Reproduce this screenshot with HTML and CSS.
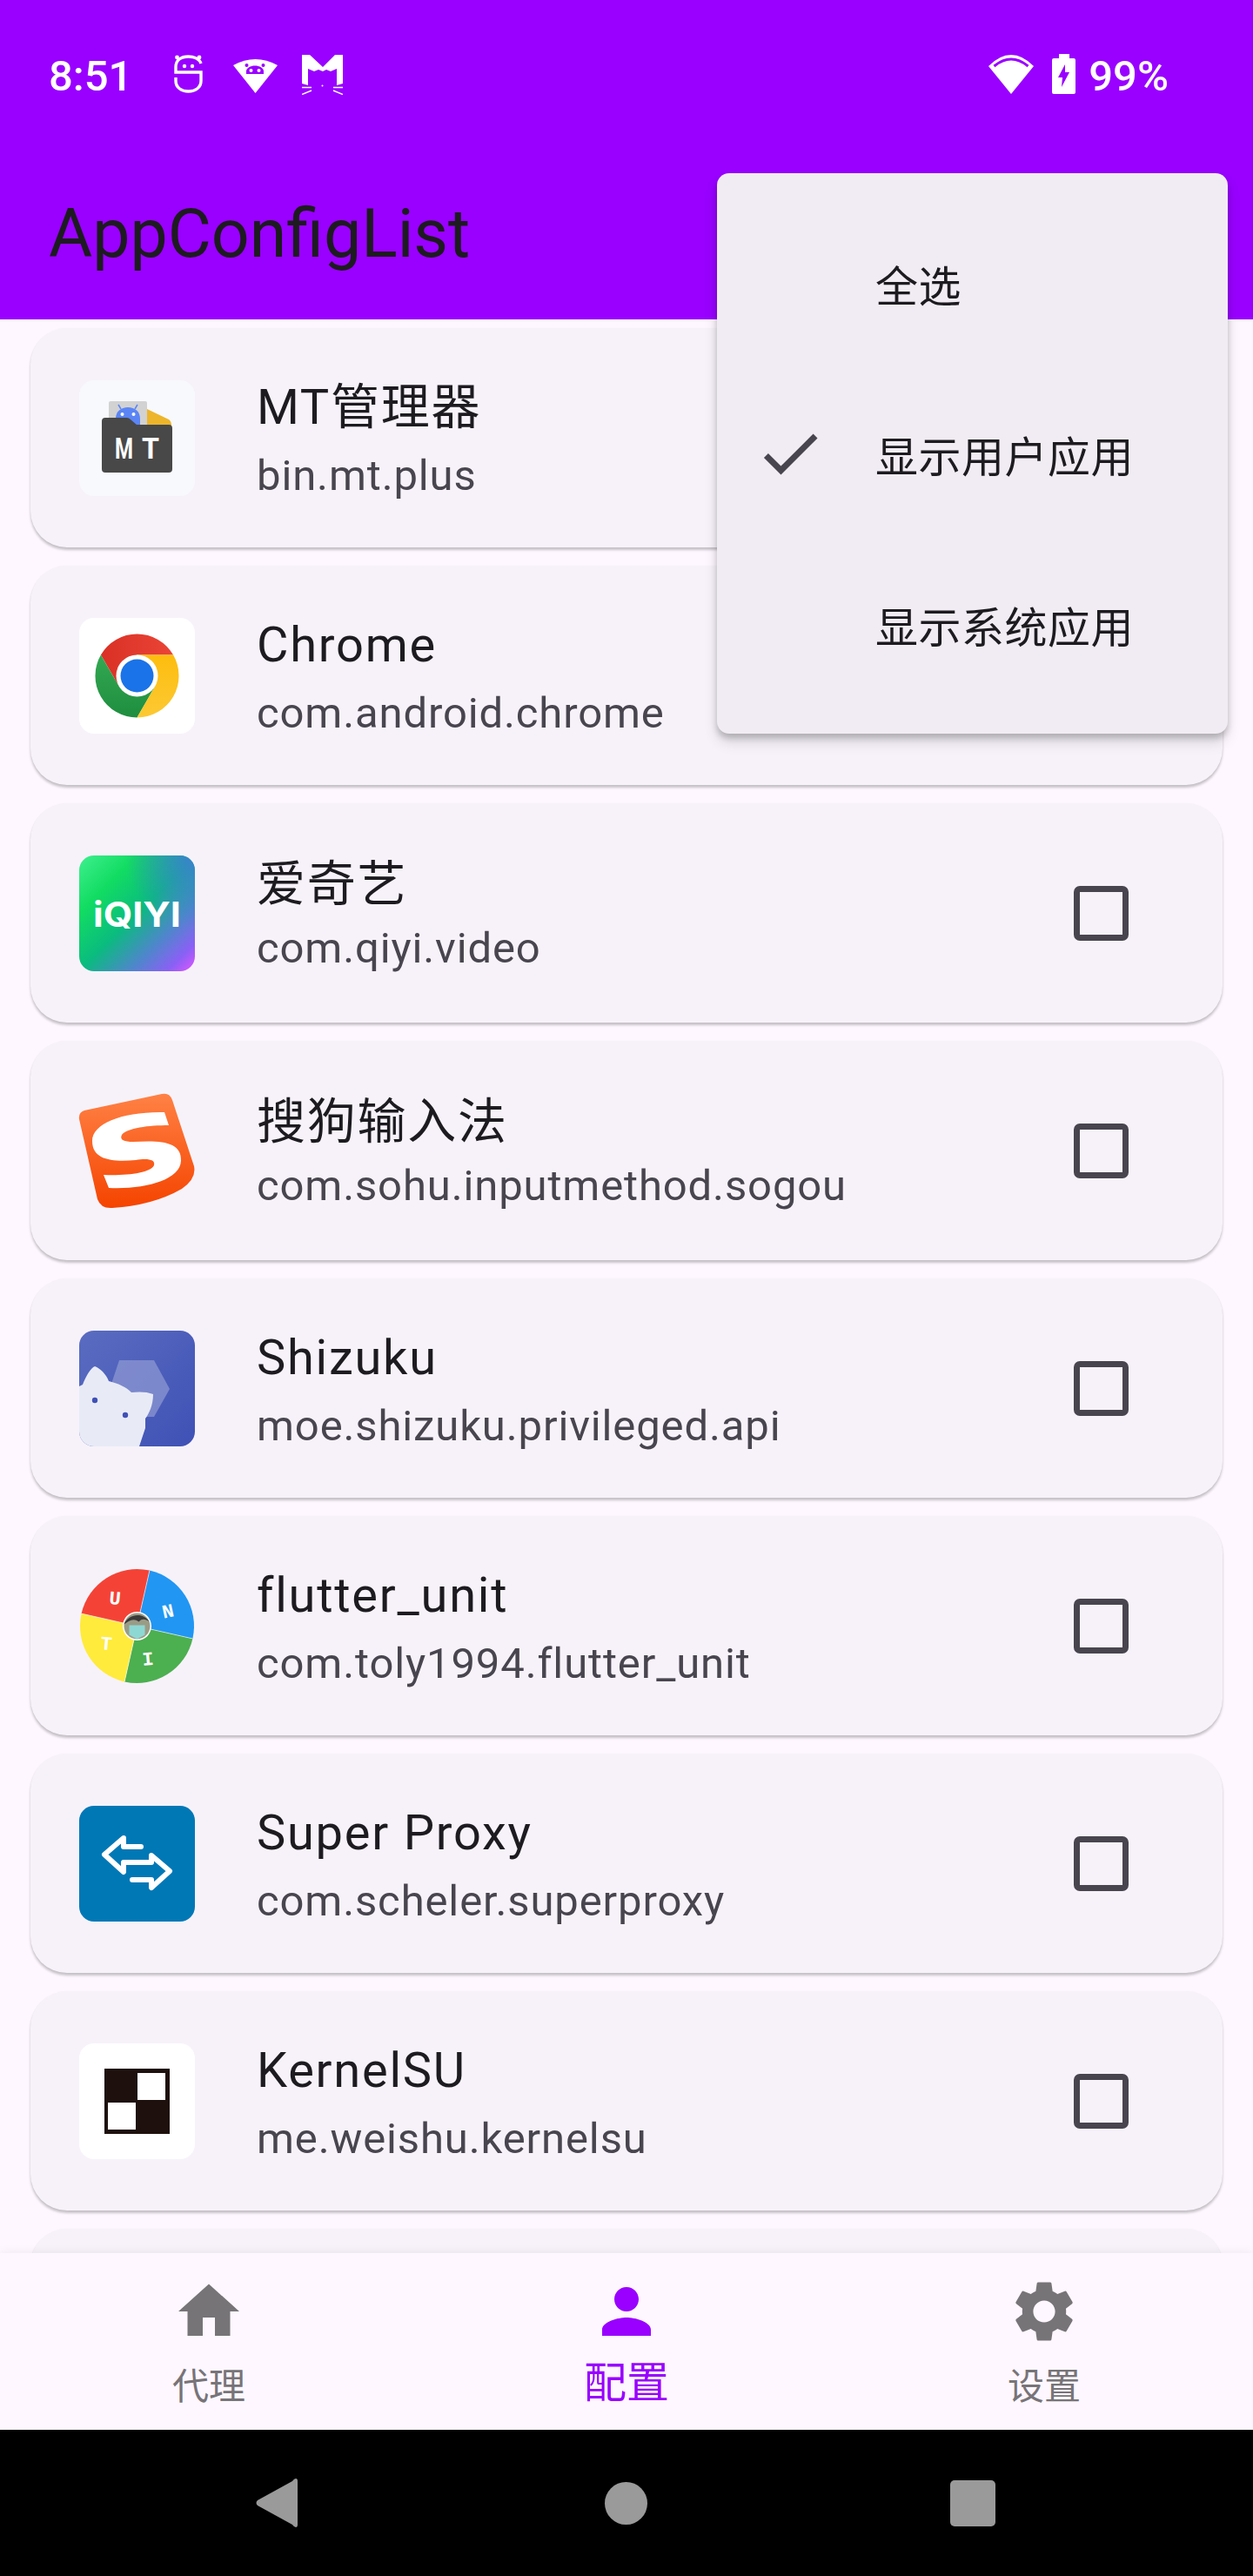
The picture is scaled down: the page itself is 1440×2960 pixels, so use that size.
FILE: index.html
```html
<!DOCTYPE html>
<html lang="zh">
<head>
<meta charset="utf-8">
<title>AppConfigList</title>
<link rel="stylesheet" href="styles.css">
</head>
<body>
<div class="phone">
  <header class="top">
    <div class="status">
      <span class="time">8:51</span>
      <svg class="st-s" viewBox="0 0 33 44" width="33" height="44">
        <path d="M31 10C29 4 22 2 16.5 2 8 2 2 6 2 14V20H31V30C31 38 24 42 16.5 42 9 42 2 38 2 30V26" fill="none" stroke="#fff" stroke-width="3.4"/>
        <circle cx="3.5" cy="3" r="2.4" fill="#fff"/><circle cx="29" cy="3" r="2.4" fill="#fff"/>
        <circle cx="12" cy="13" r="2.2" fill="#fff"/><circle cx="21" cy="13" r="2.2" fill="#fff"/>
      </svg>
      <svg class="st-w" viewBox="0 0 51 39" width="51" height="39">
        <path d="M0 7Q25.500 -7 51 7L25.500 39Z" fill="#fff"/>
        <path d="M15 17V14C15 10 20 7.500 25 7.500S35 10 35 14V17Z" fill="#9900ff"/>
        <circle cx="15.500" cy="7" r="2" fill="#9900ff"/><circle cx="34.500" cy="7" r="2" fill="#9900ff"/>
        <circle cx="20.500" cy="13" r="2" fill="#fff"/><circle cx="29.500" cy="13" r="2" fill="#fff"/>
      </svg>
      <svg class="st-m" viewBox="0 0 47 46" width="47" height="46">
        <path d="M0 0H9L24 14 38 0H47V33L40 35V16L33 19 28 17 24 19 19 17 14 19 7 16V35L0 33Z" fill="#fff"/>
        <path d="M0 37.500H11M0 45.500L11 41M36 37.500H47M36 41L47 45.500" stroke="#fff" stroke-width="1.500" fill="none"/>
        <circle cx="23.500" cy="35.500" r="1" fill="#fff"/>
      </svg>
      <span class="status-gap"></span>
      <svg class="st-wifi" viewBox="0 0 52 45" width="52" height="45">
        <path d="M0 13Q26 -13 52 13L26 45Z" fill="#fff"/>
        <path d="M6.500 13Q26 -3 45.500 13" fill="none" stroke="#9900ff" stroke-width="3"/>
      </svg>
      <svg class="st-bat" viewBox="0 0 27 46" width="27" height="46">
        <path d="M8 0H20V5H25Q27 5 27 7V44Q27 46 25 46H2Q0 46 0 44V7Q0 5 2 5H8Z" fill="#fff"/>
        <path d="M15 12L7 27H12L11 38 20 21H15Z" fill="#9900ff"/>
      </svg>
      <span class="battery">99%</span>
    </div>
    <div class="appbar"><h1 class="app-title">AppConfigList</h1></div>
  </header>

  <main class="list">
    <article class="card">
      <svg class="icon" viewBox="0 0 133 133" width="133" height="133">
        <rect width="133" height="133" rx="17" fill="#f8f9fd"/>
        <path d="M78 33L103 45Q106 47 106 52H78Z" fill="#edb52b"/>
        <rect x="34" y="24" width="44" height="30" rx="2" fill="#d2d2d2"/>
        <path d="M42 52V44C42 36 48 31 56 31S70 36 70 44V52Z" fill="#5b85f5"/>
        <path d="M45 28L48 33M67 28L64 33" stroke="#5b85f5" stroke-width="1.500"/>
        <circle cx="49.500" cy="39" r="2" fill="#fff"/><circle cx="62.500" cy="39" r="2" fill="#fff"/>
        <path d="M30 43H55Q57 43 59 45L66 51H103Q107 51 107 55V102Q107 106 103 106H30Q26 106 26 102V47Q26 43 30 43Z" fill="#484848"/>
        <text class="mt-text" x="41" y="90" textLength="21" lengthAdjust="spacingAndGlyphs">M</text><text class="mt-text" x="72" y="90" textLength="20" lengthAdjust="spacingAndGlyphs">T</text>
      </svg>
      <div class="info"><div class="name">MT管理器</div><div class="pkg">bin.mt.plus</div></div>
      <span class="check"></span>
    </article>

    <article class="card">
      <svg class="icon" viewBox="0 0 133 133" width="133" height="133">
        <defs>
          <linearGradient id="chr" x1="0" y1="0" x2="1" y2="0"><stop offset="0" stop-color="#da3025"/><stop offset="1" stop-color="#ea4537"/></linearGradient>
          <linearGradient id="chg" x1="0" y1="0" x2="0" y2="1"><stop offset="0" stop-color="#34a853"/><stop offset="1" stop-color="#1e8e3e"/></linearGradient>
          <linearGradient id="chy" x1="0" y1="0" x2="0" y2="1"><stop offset="0" stop-color="#fdbd0e"/><stop offset="1" stop-color="#fcc934"/></linearGradient>
        </defs>
        <rect width="133" height="133" rx="17" fill="#fff"/>
        <g transform="translate(66.500 66.500)">
          <path d="M-41.600 -24A48 48 0 0 1 41.600 -24H0L-20.800 12Z" fill="url(#chr)"/>
          <path d="M-41.600 -24A48 48 0 0 0 0 48L20.800 12 -20.800 12Z" fill="url(#chg)"/>
          <path d="M41.600 -24A48 48 0 0 1 0 48L20.800 12 0 -24Z" fill="url(#chy)"/>
          <circle r="24" fill="#fff"/><circle r="19" fill="#1a73e8"/>
        </g>
      </svg>
      <div class="info"><div class="name">Chrome</div><div class="pkg">com.android.chrome</div></div>
      <span class="check"></span>
    </article>

    <article class="card">
      <svg class="icon" viewBox="0 0 133 133" width="133" height="133">
        <defs>
          <linearGradient id="iq" x1="0" y1="0" x2="1" y2="1">
            <stop offset="0" stop-color="#3ff08f"/><stop offset=".25" stop-color="#12dc62"/><stop offset=".5" stop-color="#0abb7f"/><stop offset=".72" stop-color="#4f86cc"/><stop offset=".88" stop-color="#8a60f5"/><stop offset="1" stop-color="#e255ff"/>
          </linearGradient>
          <radialGradient id="iqb" cx="1" cy="0" r=".6"><stop offset="0" stop-color="#3c7fd0"/><stop offset="1" stop-color="#3c7fd0" stop-opacity="0"/></radialGradient>
        </defs>
        <rect width="133" height="133" rx="17" fill="url(#iq)"/>
        <rect width="133" height="133" rx="17" fill="url(#iqb)"/>
        <text class="iq-text" x="16" y="82" textLength="101" lengthAdjust="spacingAndGlyphs">iQIYI</text>
      </svg>
      <div class="info cjk"><div class="name">爱奇艺</div><div class="pkg">com.qiyi.video</div></div>
      <span class="check"></span>
    </article>

    <article class="card">
      <svg class="icon" viewBox="0 0 133 133" width="133" height="133">
        <defs><linearGradient id="sg" x1="0" y1="0" x2="0" y2="1"><stop offset="0" stop-color="#ff8145"/><stop offset="1" stop-color="#f54400"/></linearGradient></defs>
        <path d="M6 20L95 1Q104 -1 107 8L132 84Q135 98 118 110 85 129 38 132 25 133 21 122L0 30Q-1 22 6 20Z" fill="url(#sg)"/>
        <path d="M98 22L103 37C80 37 55 40 49 48 46 54 52 56 62 56 95 54 118 56 117 78 116 100 75 111 34 109L28 94C55 95 82 92 86 83 88 76 78 75 65 77 40 79 15 78 15 55 15 35 50 21 98 22Z" fill="#fff"/>
      </svg>
      <div class="info cjk"><div class="name">搜狗输入法</div><div class="pkg">com.sohu.inputmethod.sogou</div></div>
      <span class="check"></span>
    </article>

    <article class="card">
      <svg class="icon" viewBox="0 0 133 133" width="133" height="133">
        <defs>
          <linearGradient id="sz" x1="0" y1="0" x2="1" y2="1"><stop offset="0" stop-color="#5a6cc0"/><stop offset="1" stop-color="#3f51b5"/></linearGradient>
          <clipPath id="szc"><rect width="133" height="133" rx="17"/></clipPath>
        </defs>
        <g clip-path="url(#szc)">
          <rect width="133" height="133" fill="url(#sz)"/>
          <path d="M46 34H86L104 67 86 99H46L35 67Z" fill="#8c97d2" fill-opacity=".75"/>
          <path d="M0 64L4 62C8 52 13 43 18 41 24 43 31 50 34 58 46 61 54 65 60 71 68 70 78 70 85 73 85 86 80 96 76 101V112L69 133H0Z" fill="#e8ebf6"/>
          <circle cx="18" cy="80" r="3.200" fill="#3f51b5"/><circle cx="53" cy="97" r="3.200" fill="#3f51b5"/>
        </g>
      </svg>
      <div class="info"><div class="name">Shizuku</div><div class="pkg">moe.shizuku.privileged.api</div></div>
      <span class="check"></span>
    </article>

    <article class="card">
      <svg class="icon" viewBox="0 0 133 133" width="133" height="133">
        <g transform="translate(66.500 66.500)">
          <path d="M0 0L14.400 -63.900A65.500 65.500 0 0 1 63.900 14.400Z" fill="#2196f3"/>
          <path d="M0 0L63.900 14.400A65.500 65.500 0 0 1 -14.400 63.900Z" fill="#4caf50"/>
          <path d="M0 0L-14.400 63.900A65.500 65.500 0 0 1 -63.900 -14.400Z" fill="#ffeb3b"/>
          <path d="M0 0L-63.900 -14.400A65.500 65.500 0 0 1 14.400 -63.900Z" fill="#f44336"/>
          <path d="M14.400 -63.900L-14.400 63.900M-63.900 -14.400L63.900 14.400" stroke="#fff" stroke-opacity=".6" stroke-width="1"/>
          <text class="fu-text" transform="translate(-26 -25) rotate(5)">U</text>
          <text class="fu-text" transform="translate(37 -10) rotate(-12)">N</text>
          <text class="fu-text" transform="translate(13 45) rotate(-5)">I</text>
          <text class="fu-text" transform="translate(-36 27) rotate(5)">T</text>
          <circle r="16.500" fill="#fff"/>
          <circle r="15" fill="#9a9c86"/>
          <path d="M-15 -2C-10 -15 8 -16 14 -5 10 -8 6 -9 2 -5 -4 -10 -10 -6 -15 -2Z" fill="#3a3a3a"/>
          <path d="M-9 -1H9V10L0 15 -9 10Z" fill="#8ed8d4"/>
        </g>
      </svg>
      <div class="info"><div class="name">flutter_unit</div><div class="pkg">com.toly1994.flutter_unit</div></div>
      <span class="check"></span>
    </article>

    <article class="card">
      <svg class="icon" viewBox="0 0 133 133" width="133" height="133">
        <rect width="133" height="133" rx="17" fill="#0078b6"/>
        <path d="M71 47H51V37L29 56 51 76V65H83V57L104 75 83 94V85H61" fill="none" stroke="#fff" stroke-width="6" stroke-linecap="round" stroke-linejoin="round"/>
      </svg>
      <div class="info"><div class="name">Super Proxy</div><div class="pkg">com.scheler.superproxy</div></div>
      <span class="check"></span>
    </article>

    <article class="card">
      <svg class="icon" viewBox="0 0 133 133" width="133" height="133">
        <rect width="133" height="133" rx="17" fill="#fff"/>
        <rect x="29" y="29" width="75" height="75" fill="#1e100c"/>
        <rect x="67" y="34" width="32" height="31" fill="#fff"/>
        <rect x="33" y="68" width="32" height="31" fill="#fff"/>
      </svg>
      <div class="info"><div class="name">KernelSU</div><div class="pkg">me.weishu.kernelsu</div></div>
      <span class="check"></span>
    </article>

    <article class="card"></article>
  </main>

  <nav class="bottom">
    <div class="tab">
      <svg class="tab-icon" viewBox="0 0 24 24" width="84" height="84"><path d="M10 20v-6h4v6h5v-8h3L12 3 2 12h3v8z"/></svg>
      <span class="tab-label">代理</span>
    </div>
    <div class="tab tab-on">
      <svg class="tab-icon" viewBox="0 0 24 24" width="84" height="84"><path d="M12 12c2.210 0 4-1.790 4-4s-1.790-4-4-4-4 1.790-4 4 1.790 4 4 4zm0 2c-2.670 0-8 1.340-8 4v2h16v-2c0-2.660-5.330-4-8-4z"/></svg>
      <span class="tab-label">配置</span>
    </div>
    <div class="tab">
      <svg class="tab-icon" viewBox="0 0 24 24" width="84" height="84"><path d="M19.140 12.940c.040-.3.060-.61.060-.94 0-.32-.020-.64-.070-.94l2.030-1.580c.180-.14.230-.41.120-.61l-1.920-3.320c-.120-.22-.370-.29-.590-.22l-2.390.96c-.5-.38-1.030-.7-1.620-.94l-.36-2.540c-.040-.24-.240-.41-.480-.41h-3.840c-.240 0-.43.170-.470.41l-.36 2.540c-.59.240-1.130.57-1.620.94l-2.390-.96c-.220-.080-.470 0-.590.22L2.740 8.870c-.120.210-.080.470.120.610l2.030 1.580c-.050.3-.090.630-.090.940s.020.640.070.94l-2.030 1.580c-.180.140-.230.410-.120.610l1.920 3.320c.120.220.370.29.590.22l2.390-.96c.5.380 1.030.7 1.620.94l.36 2.540c.050.240.240.41.480.41h3.840c.240 0 .44-.170.470-.41l.36-2.540c.59-.240 1.130-.56 1.620-.94l2.390.96c.220.080.470 0 .590-.22l1.920-3.320c.120-.22.070-.47-.120-.61l-2.010-1.580zM12 15.600c-1.980 0-3.600-1.620-3.600-3.600s1.620-3.600 3.600-3.600 3.600 1.620 3.600 3.600-1.620 3.600-3.600 3.600z"/></svg>
      <span class="tab-label">设置</span>
    </div>
  </nav>

  <footer class="sysnav">
    <svg viewBox="0 0 48 56" width="48" height="56"><path d="M46 0Q48 0 48 3V53Q48 56 46 56 44 56 42 53L2 31Q-1 28 2 25L42 3Q44 0 46 0Z" fill="#9a9a9a"/></svg>
    <span class="sys-circle"></span>
    <span class="sys-square"></span>
  </footer>

  <div class="menu">
    <div class="menu-item"><span class="menu-check"></span><span>全选</span></div>
    <div class="menu-item">
      <span class="menu-check"><svg viewBox="0 0 24 24" width="84" height="84"><path d="M9 16.170L4.830 12l-1.420 1.410L9 19 21 7l-1.410-1.410z" fill="#49454f"/></svg></span>
      <span>显示用户应用</span>
    </div>
    <div class="menu-item"><span class="menu-check"></span><span>显示系统应用</span></div>
  </div>
</div>
</body>
</html>
```

FILE: styles.css
```css
* { box-sizing: border-box; }
html, body { margin: 0; padding: 0; }
body {
  width: 1440px;
  height: 2960px;
  overflow: hidden;
  font-family: Roboto, "Noto Sans CJK SC", sans-serif;
  color: #1d1b20;
}
.phone {
  position: relative;
  width: 1440px;
  height: 2960px;
  display: flex;
  flex-direction: column;
  background: #fef7ff;
  overflow: hidden;
}

/* header */
.top { flex: none; background: #9900ff; }
.status {
  height: 170px;
  display: flex;
  align-items: center;
  padding: 0 97px 0 56px;
  color: #fff;
}
.time { font-size: 49px; font-weight: 500; width: 144px; padding-top: 4px; }
.st-w { margin: 4px 0 0 35px; }
.st-m { margin: 2px 0 0 28px; }
.status-gap { flex: 1; }
.st-wifi { margin-top: 1px; }
.st-bat { margin-left: 21px; }
.battery { font-size: 49px; font-weight: 500; margin-left: 15px; padding-top: 4px; }
.appbar {
  height: 197px;
  display: flex;
  align-items: center;
  padding: 0 56px;
}
.app-title { margin: 0; font-size: 77px; font-weight: 400; }

/* list */
.list {
  flex: 1;
  min-height: 0;
  overflow: hidden;
  display: flex;
  flex-direction: column;
  gap: 21px;
  padding: 10px 35px 0;
}
.card {
  flex: none;
  height: 252px;
  display: flex;
  align-items: center;
  padding: 0 108px 0 56px;
  background: #f7f2fa;
  border-radius: 42px;
  box-shadow: 0 3px 3px rgba(0, 0, 0, .22), 0 0 2px rgba(0, 0, 0, .04);
}
.icon { flex: none; margin-right: 71px; overflow: visible; }
.info { flex: 1; min-width: 0; }
.name { font-size: 56px; line-height: 88px; letter-spacing: 1.75px; }
.pkg { font-size: 49px; line-height: 70px; letter-spacing: .87px; color: #49454f; }
.cjk .name { line-height: 78px; padding-top: 3px; }
.check {
  flex: none;
  width: 63px;
  height: 63px;
  border: 7px solid #49454f;
  border-radius: 7px;
}
.mt-text { font: 700 33px Roboto, sans-serif; fill: #fff; }
.iq-text { font: 700 40px Inter, sans-serif; fill: #fff; }
.fu-text { font: 700 22px "Liberation Mono", monospace; fill: #fff; text-anchor: middle; }

/* bottom nav */
.bottom {
  position: relative;
  flex: none;
  height: 203px;
  display: grid;
  grid-template-columns: repeat(3, 1fr);
  background: #fef7ff;
  box-shadow: 0 -2px 10px rgba(0, 0, 0, .05);
}
.tab {
  display: flex;
  flex-direction: column;
  align-items: center;
  padding-top: 25px;
  color: #777478;
}
.tab-icon { flex: none; fill: currentColor; }
.tab-label { font-size: 42px; line-height: 74px; padding-top: 8px; }
.tab-on { color: #9900ff; }
.tab-on .tab-label { font-size: 49px; padding-top: 4px; }

/* system nav */
.sysnav {
  flex: none;
  height: 168px;
  background: #000;
  display: flex;
  align-items: center;
  padding-left: 294px;
}
.sys-circle {
  width: 49px;
  height: 49px;
  margin-left: 353px;
  border-radius: 50%;
  background: #9a9a9a;
}
.sys-square {
  width: 52px;
  height: 53px;
  margin-left: 348px;
  border-radius: 5px;
  background: #9a9a9a;
}

/* popup menu */
.menu {
  position: absolute;
  left: 824px;
  top: 199px;
  width: 587px;
  padding: 28px 0;
  background: #f1ecf3;
  border-radius: 14px;
  box-shadow: 0 5px 7px rgba(0, 0, 0, .2), 0 10px 16px rgba(0, 0, 0, .12);
}
.menu-item {
  height: 196px;
  display: flex;
  align-items: center;
  padding-left: 42px;
  font-size: 49px;
  letter-spacing: .5px;
}
.menu-check {
  flex: none;
  width: 84px;
  height: 84px;
  margin-right: 56px;
}
```
